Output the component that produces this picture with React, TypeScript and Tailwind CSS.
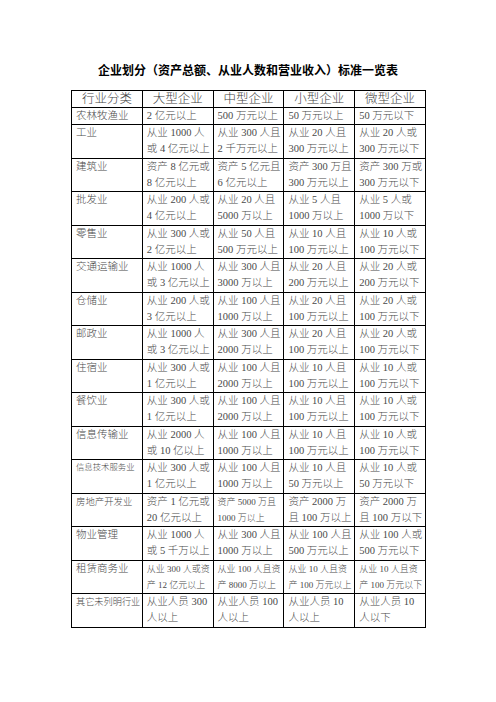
const rows: string[][] = [
  ["农林牧渔业", "2 亿元以上", "500 万元以上", "50 万元以上", "50 万元以下"],
  ["工业", "从业 1000 人|或 4 亿元以上", "从业 300 人且|2 千万元以上", "从业 20 人且|300 万元以上", "从业 20 人或|300 万元以下"],
  ["建筑业", "资产 8 亿元或|8 亿元以上", "资产 5 亿元且|6 亿元以上", "资产 300 万且|300 万元以上", "资产 300 万或|300 万元以下"],
  ["批发业", "从业 200 人或|4 亿元以上", "从业 20 人且|5000 万以上", "从业 5 人且|1000 万以上", "从业 5 人或|1000 万以下"],
  ["零售业", "从业 300 人或|2 亿元以上", "从业 50 人且|500 万元以上", "从业 10 人且|100 万元以上", "从业 10 人或|100 万元以下"],
  ["交通运输业", "从业 1000 人|或 3 亿元以上", "从业 300 人且|3000 万以上", "从业 20 人且|200 万元以上", "从业 20 人或|200 万元以下"],
  ["仓储业", "从业 200 人或|3 亿元以上", "从业 100 人且|1000 万以上", "从业 20 人且|100 万元以上", "从业 20 人或|100 万元以下"],
  ["邮政业", "从业 1000 人|或 3 亿元以上", "从业 300 人且|2000 万以上", "从业 20 人且|100 万元以上", "从业 20 人或|100 万元以下"],
  ["住宿业", "从业 300 人或|1 亿元以上", "从业 100 人且|2000 万以上", "从业 10 人且|100 万元以上", "从业 10 人或|100 万元以下"],
  ["餐饮业", "从业 300 人或|1 亿元以上", "从业 100 人且|2000 万以上", "从业 10 人且|100 万元以上", "从业 10 人或|100 万元以下"],
  ["信息传输业", "从业 2000 人|或 10 亿以上", "从业 100 人且|1000 万以上", "从业 10 人且|100 万元以上", "从业 10 人或|100 万元以下"],
  ["信息技术服务业", "从业 300 人或|1 亿元以上", "从业 100 人且|1000 万以上", "从业 10 人且|50 万元以上", "从业 10 人或|50 万元以下"],
  ["房地产开发业", "资产 1 亿元或|20 亿元以上", "资产 5000 万且|1000 万以上", "资产 2000 万|且 100 万以上", "资产 2000 万|且 100 万以下"],
  ["物业管理", "从业 1000 人|或 5 千万以上", "从业 300 人且|1000 万以上", "从业 100 人且|500 万元以上", "从业 100 人或|500 万元以下"],
  ["租赁商务业", "从业 300 人或资|产 12 亿元以上", "从业 100 人且资|产 8000 万以上", "从业 10 人且资|产 100 万元以上", "从业 10 人且资|产 100 万元以下"],
  ["其它未列明行业", "从业人员 300|人以上", "从业人员 100|人以上", "从业人员 10|人以上", "从业人员 10|人以下"],
];

const headers = ["行业分类", "大型企业", "中型企业", "小型企业", "微型企业"];

// cells whose text is set smaller in the source document
const small: Record<string, string> = {
  "信息技术服务业": "text-[8.4px]",
  "其它未列明行业": "text-[9.2px]",
  "房地产开发业": "text-[9.4px]",
  "资产 5000 万且|1000 万以上": "text-[9px]",
  "从业 300 人或资|产 12 亿元以上": "text-[9px]",
  "从业 100 人且资|产 8000 万以上": "text-[9px]",
  "从业 10 人且资|产 100 万元以上": "text-[9px]",
  "从业 10 人且资|产 100 万元以下": "text-[9px]",
};

export default function App() {
  return (
    <div className="w-[496px] h-[702px] bg-white font-['Liberation_Serif','Noto_Sans_CJK_SC',serif]">
      <h1 className="pt-[62px] text-center text-[12px] leading-[16px] font-bold text-black font-['Noto_Sans_CJK_SC',sans-serif]">
        企业划分（资产总额、从业人数和营业收入）标准一览表
      </h1>
      <table className="mt-[12px] ml-[71px] w-[355px] table-fixed border-collapse">
        <thead>
          <tr>
            {headers.map((h) => (
              <th
                key={h}
                className="border border-black p-0 text-center text-[12.5px] leading-[16px] font-light text-[#444]"
              >
                {h}
              </th>
            ))}
          </tr>
        </thead>
        <tbody>
          {rows.map((r, i) => (
            <tr key={i}>
              {r.map((c, j) => (
                <td
                  key={j}
                  className={`border border-black p-0 pl-[4px] align-top font-light text-[#4a4a4a] whitespace-nowrap overflow-hidden ${
                    i === 0 ? "leading-[16px]" : "leading-[16.25px]"
                  } ${small[c] ?? "text-[10.5px]"}`}
                >
                  {c.split("|").map((line, k) => (
                    <div key={k} className={i === 0 ? "h-[16px]" : "h-[16.25px]"}>
                      {line}
                    </div>
                  ))}
                  {i > 0 && c.indexOf("|") < 0 && <div className="h-[16.25px]" />}
                </td>
              ))}
            </tr>
          ))}
        </tbody>
      </table>
    </div>
  );
}
